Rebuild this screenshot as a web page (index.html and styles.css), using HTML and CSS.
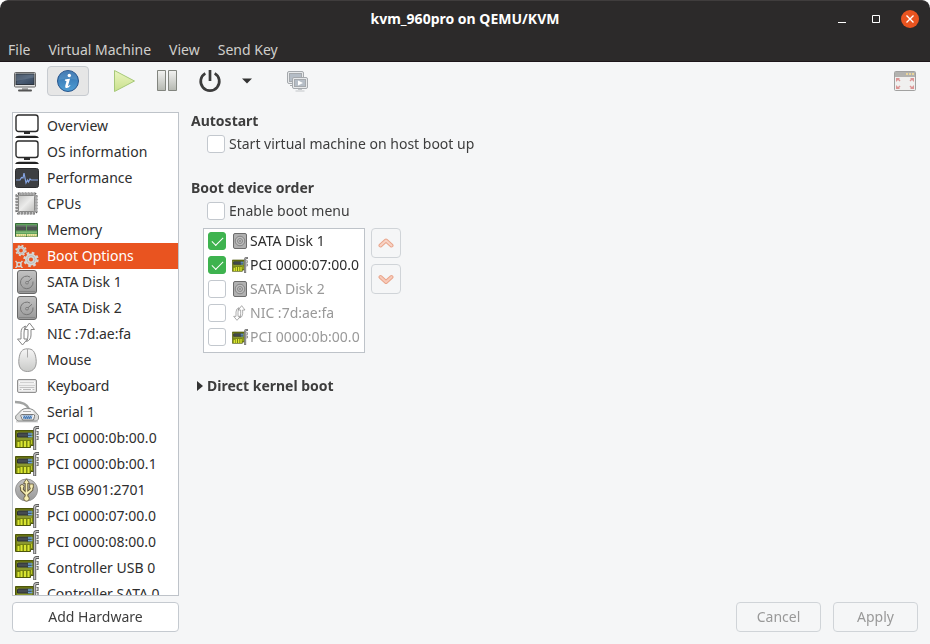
FILE: index.html
```html
<!DOCTYPE html>
<html lang="en">
<head>
<meta charset="utf-8">
<title>kvm_960pro on QEMU/KVM</title>
<link rel="stylesheet" href="styles.css">
</head>
<body>
<svg class="defs" aria-hidden="true">
  <defs>
    <linearGradient id="metal" x1="0" y1="0" x2="0" y2="1"><stop offset="0" stop-color="#c2c2c2"/><stop offset="1" stop-color="#999"/></linearGradient>
    <linearGradient id="light" x1="0" y1="0" x2="0" y2="1"><stop offset="0" stop-color="#f6f6f6"/><stop offset="1" stop-color="#c9cac8"/></linearGradient>
    <linearGradient id="chip" x1="0" y1="0" x2="1" y2="1"><stop offset="0" stop-color="#c4c4c2"/><stop offset=".5" stop-color="#ececeb"/><stop offset="1" stop-color="#bdbdbb"/></linearGradient>
    <linearGradient id="slate" x1="0" y1="0" x2="1" y2="1"><stop offset="0" stop-color="#2d3b4e"/><stop offset=".5" stop-color="#4b5d75"/><stop offset="1" stop-color="#34445a"/></linearGradient>
    <linearGradient id="blue" x1="0" y1="0" x2="0" y2="1"><stop offset="0" stop-color="#2f6cab"/><stop offset="1" stop-color="#4f9ed4"/></linearGradient>
    <linearGradient id="lime" x1="0" y1="0" x2="0" y2="1"><stop offset="0" stop-color="#eaf5c0"/><stop offset="1" stop-color="#c9e08c"/></linearGradient>
    <linearGradient id="pause" x1="0" y1="0" x2="0" y2="1"><stop offset="0" stop-color="#f2f2f1"/><stop offset="1" stop-color="#b5b8b1"/></linearGradient>
    <linearGradient id="board" x1="0" y1="0" x2="0" y2="1"><stop offset="0" stop-color="#66720f"/><stop offset="1" stop-color="#7d8b12"/></linearGradient>
  </defs>
  <symbol id="i-monitor" viewBox="0 0 24 24">
    <rect x="1" y="1" width="22" height="16.500" rx="2.500" fill="#fff" stroke="#2b2b2b" stroke-width="1.400"/>
    <path d="M9 18h6v2H9z" fill="#2b2b2b"/><path d="M0 24q1-2.300 4-2.300h16q3 0 4 2.300z" fill="#222"/>
  </symbol>
  <symbol id="i-perf" viewBox="0 0 24 24">
    <rect x=".5" y="2.500" width="23" height="19" rx="2" fill="#3d3f42" stroke="#2c2d2f"/>
    <path d="M1 14h4l1.500-2.500 1.500.5 1-5 2 10 1.500-3 1 2 1.500-3 1 1h7" fill="none" stroke="#86a5e4" stroke-width="1.200"/>
  </symbol>
  <symbol id="i-cpu" viewBox="0 0 24 24">
    <rect x="2" y="2" width="19" height="19" rx="1.500" fill="none" stroke="#5c5c5c" stroke-width="3" stroke-dasharray="2.100 .9"/>
    <rect x="2" y="2" width="19" height="19" rx="1.500" fill="none" stroke="#bbb" stroke-width="1.500" stroke-dasharray="1 2" stroke-dashoffset="-.5"/>
    <rect x="3.500" y="3.500" width="16" height="16" rx="1" fill="url(#chip)" stroke="#8a8a89"/>
  </symbol>
  <symbol id="i-mem" viewBox="0 0 24 24">
    <path d="M.5 5.500h22v13H.5z" fill="#5fa35c" stroke="#386c3a"/>
    <path d="M1 7.500h10v5H1zM12 7.500h10v5H12z" fill="#4d5450"/><path d="M1 8h10m1 0h10" stroke="#7b837d"/>
    <path d="M1 14.200h21" stroke="#93c384"/><path d="M1 17.200h10m1 0h10" stroke="#f0e9a2" stroke-width="2.600"/><path d="M1.500 17.500h21" stroke="#9aa653" stroke-width="2" stroke-dasharray=".6 1.400"/>
  </symbol>
  <symbol id="i-gears" viewBox="0 0 24 24">
    <g fill="none" stroke="#d5d6d3">
      <circle cx="16" cy="15.500" r="4" stroke-width="4"/><circle cx="16" cy="15.500" r="6.500" stroke-width="2.400" stroke-dasharray="2.550 2.550"/>
      <circle cx="6" cy="6.500" r="3.200" stroke-width="2.600"/><circle cx="6" cy="6.500" r="4.800" stroke-width="1.800" stroke-dasharray="1.880 1.880"/>
      <circle cx="4" cy="20.500" r="2" stroke-width="1.600"/><path d="m.5 17 2 2M7.500 17l-2 2M.5 24l2-2M7.500 24l-2-2" stroke-width="1.500"/>
    </g>
    <circle cx="16" cy="15.500" r="4" fill="none" stroke="#aaaba8" stroke-width=".6"/><circle cx="6" cy="6.500" r="3.300" fill="none" stroke="#aaaba8" stroke-width=".5"/>
  </symbol>
  <symbol id="i-disk" viewBox="0 0 24 24">
    <rect x="2.500" y=".5" width="19" height="23" rx="2.500" fill="url(#metal)" stroke="#686868"/>
    <path d="M4 21.500h16" stroke="#858585"/><path d="M15 7a6.300 6.300 0 1 0 3 4.500M12.500 12.200l4.500-4" fill="none" stroke="#777"/>
    <circle cx="12" cy="12.800" r="1.700" fill="#777"/><circle cx="12" cy="12.800" r=".7" fill="#ddd"/>
  </symbol>
  <symbol id="i-disk-small" viewBox="0 0 16 16">
    <rect x="1.500" y=".5" width="13" height="15" rx="1.500" fill="#b0b0b0" stroke="#6c6c6c"/>
    <circle cx="8" cy="8" r="4.800" fill="#bdbdbd" stroke="#858585"/><circle cx="8" cy="8" r="2.500" fill="none" stroke="#888"/><circle cx="8" cy="8" r=".8" fill="#666"/>
  </symbol>
  <symbol id="i-nic" viewBox="0 0 24 24">
    <path d="M10.500 4Q6 5.500 6 10.500V17H2.500l5 6 5-6H9v-6Q9 7 10.500 4zM11.500 19.500Q16 18 16 13V7.500h3.500L14.500 1 9.500 7.500H13V13q0 4-1.500 6.500z" fill="#fff" stroke="#858585"/>
  </symbol>
  <symbol id="i-mouse" viewBox="0 0 24 24">
    <path d="M12.500.8c5.500 0 7.500 3 8.500 9.700 1.200 8-2 13-8.500 13S2.800 18.500 4 10.500C5 3.800 7 .8 12.500.8z" fill="url(#light)" stroke="#999"/><path d="M12.500 1v8.500" stroke="#aaa"/>
  </symbol>
  <symbol id="i-keyboard" viewBox="0 0 24 24">
    <rect x="2.500" y="5.500" width="19" height="13" rx="1.500" fill="#e0e0e0" stroke="#919191"/>
    <path d="M4 8.500h16M4 11.500h16M4 15.500h16" stroke="#fff" stroke-width="2"/>
    <path d="M5.500 8.500h14M4.500 11.500h15M5.500 13.500h13" stroke="#a3a3a3" stroke-dasharray="1 1"/><path d="M4.500 15.500h2m1.500 0h8m1.500 0h2" stroke="#bbb"/>
  </symbol>
  <symbol id="i-serial" viewBox="0 0 24 24">
    <path d="M1 21.500h22" stroke="#bbb" stroke-width="2" opacity=".6"/>
    <path d="M0 2q11 0 14 7" fill="none" stroke="#a1a3a2" stroke-width="2.400"/>
    <path d="M6.500 10q5-3.500 12 0l5 5.500v3.500l-2 2H3l-2.300-2v-3z" fill="#d8d9d8" stroke="#8c8e8d"/>
    <path d="M7.500 10.500q5-2.500 10 0l2 3.500H5z" fill="#f5f5f5"/><path d="M8 11.500h8" stroke="#aaa"/>
    <path d="M6.500 14.500h12q1.500 0 1 2l-1 3.500h-11l-1.500-3.500q-.5-2 .5-2z" fill="#f2f2f2" stroke="#777"/>
    <path d="M7.500 15.500h10l-1 3.500h-8z" fill="#4d7db4"/><path d="M8 16.500h9M9 18.200h7" stroke="#b4d0ef" stroke-dasharray="1 1" stroke-width=".8"/>
  </symbol>
  <symbol id="i-pci" viewBox="0 0 24 24">
    <path d="M.5 4.500h18.500v15h-3.500v2H.5z" fill="url(#board)" stroke="#4d560b"/>
    <path d="M2 6h15v8H2z" fill="#8b9830"/><path d="M3.500 7h9q1 0 1 1v3h-11V8q0-1 1-1z" fill="#454b50" stroke="#2c3033"/><path d="M12.500 6.500h4v5h-4z" fill="#30404f"/><path d="M13 8h4.500M13 10.500h4.500" stroke="#6fa4d4" stroke-width="1.300"/>
    <path d="M3.500 21v-5M6.500 21v-6M10 21v-6M13.500 21v-6" stroke="#d9e531" stroke-width="2"/><path d="M16.500 14v4" stroke="#bdc82b"/>
    <path d="M19.700 24V3.500q0-2 2-2h2.300" fill="none" stroke="#5a5a5a" stroke-width="3"/><path d="M19.700 23.500V3.500q0-2 2-2h2" fill="none" stroke="#c9c9c9" stroke-width="1.200"/>
    <path d="M21.500 5.500H23v3h-1.500M21.500 10.500H23v3h-1.500" fill="none" stroke="#6d6d6d" stroke-width="1.200"/>
  </symbol>
  <symbol id="i-usb" viewBox="0 0 24 24">
    <circle cx="11.500" cy="12" r="11" fill="url(#metal)" stroke="#959595"/>
    <g stroke="#5d5236" fill="none" stroke-width="3.600"><path d="M11.500 3.500v17M7 8.500v3.500l4.500 4.500M16.500 8v3.500L11.500 16"/></g>
    <g fill="#f6edb2" stroke="#5d5236" stroke-width=".8"><path d="m11.500.8 3 4.700h-6z"/><circle cx="11.500" cy="20.500" r="2.700"/><circle cx="7" cy="8.500" r="2"/><path d="M14.700 6h3.600v4h-3.600z"/></g>
    <path d="M11.500 3.500v17M7 8.500v3.500l4.500 4.500M16.500 8v3.500L11.500 16" stroke="#f6edb2" fill="none" stroke-width="1.700"/>
  </symbol>
</svg>

<div class="window">
  <header class="header">
    <div class="titlebar">
      <h1 class="title">kvm_960pro on QEMU/KVM</h1>
      <div class="window-controls">
        <button class="wm" aria-label="Minimize"><svg width="10" height="10"><path d="M1 8.500h8" stroke="#fff"/></svg></button>
        <button class="wm" aria-label="Maximize"><svg width="10" height="10"><path d="M1.500 1.500h7v7h-7z" fill="none" stroke="#fff"/></svg></button>
        <button class="wm wm-close" aria-label="Close"><svg width="10" height="10"><path d="m1.500 1.500 7 7m0-7-7 7" stroke="#fff" stroke-width="1.400"/></svg></button>
      </div>
    </div>
    <nav class="menubar">
      <button>File</button><button>Virtual Machine</button><button>View</button><button>Send Key</button>
    </nav>
  </header>

  <div class="toolbar">
    <button class="tool" aria-label="Console"><svg width="24" height="24" viewBox="0 0 24 24">
      <rect x="1.500" y="3.500" width="21" height="14.500" rx="1" fill="#e1e1e1" stroke="#666"/><rect x="3" y="5" width="18" height="10.500" fill="url(#slate)" stroke="#2d343d"/>
      <path d="M3 5.500h18v3L3 12z" fill="#788799" opacity=".4"/><path d="M9 18.500h6v2.500H9z" fill="#aaa"/><path d="M6 21.500h12" stroke="#555" stroke-width="2" stroke-linecap="round"/></svg></button>
    <button class="tool tool-active" aria-label="Details" aria-pressed="true"><svg width="24" height="24" viewBox="0 0 24 24">
      <circle cx="12" cy="12" r="10.500" fill="url(#blue)" stroke="#28558c"/><path d="M2.500 11a9.500 9.500 0 0 1 19 0q-9-3-19 0z" fill="#fff" opacity=".1"/>
      <circle cx="13.300" cy="6.500" r="1.700" fill="#fff"/><path d="M9 10.500q3-.5 5-.8l-2 7q0 1 2-.7l.5.5q-2.500 3-4.500 2.500-1.300-.4-.7-2.500l1.200-4.300-1.700-.7z" fill="#fff"/></svg></button>
    <button class="tool tool-run" aria-label="Run"><svg width="24" height="24" viewBox="0 0 24 24"><path d="M2.500 1.500v21L22.500 12z" fill="url(#lime)" stroke="#a6c879" stroke-linejoin="round"/></svg></button>
    <button class="tool" aria-label="Pause"><svg width="24" height="24" viewBox="0 0 24 24"><path d="M2.500 1.500h8v20h-8zM13.500 1.500h8v20h-8z" fill="url(#pause)" stroke="#82857f"/></svg></button>
    <button class="tool" aria-label="Shut down"><svg width="24" height="24" viewBox="0 0 24 24"><path d="M7.300 4.300a9.300 9.300 0 1 0 9.400 0M12 1v11" fill="none" stroke="#3c3c3c" stroke-width="2.700"/></svg></button>
    <button class="tool tool-arrow" aria-label="Shut down options"><svg width="12" height="6"><path d="M1 .5h10l-5 5z" fill="#333"/></svg></button>
    <button class="tool tool-snap" aria-label="Manage snapshots"><svg width="24" height="24" viewBox="0 0 24 24">
      <g fill="#e7e9eb" stroke="#a5a9ad"><rect x="1.500" y="2.500" width="16" height="12" rx="1.500"/><rect x="3.500" y="4.500" width="12" height="8" fill="#b5bdc6"/><path d="M4 16.500h4"/>
      <rect x="6.500" y="8.500" width="15" height="11" rx="1.500"/><rect x="8.500" y="10.500" width="11" height="7" fill="#b5bdc6"/></g><path d="M12 20.500h4M9.500 22h9" stroke="#c3c6c9"/><path d="m12 11.500 5 2.500-5 2.500z" fill="#fff"/></svg></button>
    <button class="tool tool-full" aria-label="Fullscreen"><svg width="24" height="24" viewBox="0 0 24 24">
      <rect x="1.500" y="2.500" width="21" height="19" rx="1" fill="#f0f0ef" stroke="#a1a1a0"/><path d="M2 3h20v5H2z" fill="#b2b2af"/><path d="M13 5h2m1 0h2m1 0h2" stroke="#ead59a" stroke-width="2"/>
      <path d="M3 9h4L6 10l1.500 1.500-1 1L5 11l-2 2zM21 9h-4l1 1-1.500 1.500 1 1L19 11l2 2zM3 20h4l-1-1 1.500-1.500-1-1L5 18l-2-2zM21 20h-4l1-1-1.500-1.500 1-1L19 18l2-2z" fill="#dc9595"/></svg></button>
  </div>

  <div class="body">
    <aside class="sidebar">
      <ul class="hardware">
        <li><svg><use href="#i-monitor"/></svg>Overview</li>
        <li><svg><use href="#i-monitor"/></svg>OS information</li>
        <li><svg><use href="#i-perf"/></svg>Performance</li>
        <li><svg><use href="#i-cpu"/></svg>CPUs</li>
        <li><svg><use href="#i-mem"/></svg>Memory</li>
        <li class="selected"><svg><use href="#i-gears"/></svg>Boot Options</li>
        <li><svg><use href="#i-disk"/></svg>SATA Disk 1</li>
        <li><svg><use href="#i-disk"/></svg>SATA Disk 2</li>
        <li><svg><use href="#i-nic"/></svg>NIC :7d:ae:fa</li>
        <li><svg><use href="#i-mouse"/></svg>Mouse</li>
        <li><svg><use href="#i-keyboard"/></svg>Keyboard</li>
        <li><svg><use href="#i-serial"/></svg>Serial 1</li>
        <li><svg><use href="#i-pci"/></svg>PCI 0000:0b:00.0</li>
        <li><svg><use href="#i-pci"/></svg>PCI 0000:0b:00.1</li>
        <li><svg><use href="#i-usb"/></svg>USB 6901:2701</li>
        <li><svg><use href="#i-pci"/></svg>PCI 0000:07:00.0</li>
        <li><svg><use href="#i-pci"/></svg>PCI 0000:08:00.0</li>
        <li><svg><use href="#i-pci"/></svg>Controller USB 0</li>
        <li><svg><use href="#i-pci"/></svg>Controller SATA 0</li>
      </ul>
      <button class="button">Add Hardware</button>
    </aside>

    <main class="details">
      <section class="group">
        <h2>Autostart</h2>
        <label class="option"><input type="checkbox">Start virtual machine on host boot up</label>
      </section>
      <section class="group">
        <h2>Boot device order</h2>
        <label class="option"><input type="checkbox">Enable boot menu</label>
        <div class="boot">
          <div class="boot-list">
            <label class="device"><input type="checkbox" checked><svg><use href="#i-disk-small"/></svg>SATA Disk 1</label>
            <label class="device"><input type="checkbox" checked><svg><use href="#i-pci"/></svg>PCI 0000:07:00.0</label>
            <label class="device off"><input type="checkbox"><svg><use href="#i-disk-small"/></svg>SATA Disk 2</label>
            <label class="device off"><input type="checkbox"><svg><use href="#i-nic"/></svg>NIC :7d:ae:fa</label>
            <label class="device off"><input type="checkbox"><svg><use href="#i-pci"/></svg>PCI 0000:0b:00.0</label>
          </div>
          <div class="movers">
            <button class="button mover" aria-label="Move up" disabled><svg width="16" height="16"><path d="m2.500 10.500 5.500-5 5.500 5" fill="none" stroke="#e9a58b" stroke-width="4" stroke-linecap="round" stroke-linejoin="round"/><path d="m2.500 10.500 5.500-5 5.500 5" fill="none" stroke="#f8d3c5" stroke-width="2" stroke-linecap="round" stroke-linejoin="round"/></svg></button>
            <button class="button mover" aria-label="Move down" disabled><svg width="16" height="16"><path d="m2.500 6 5.500 5 5.500-5" fill="none" stroke="#e9a58b" stroke-width="4" stroke-linecap="round" stroke-linejoin="round"/><path d="m2.500 6 5.500 5 5.500-5" fill="none" stroke="#f8cab9" stroke-width="2" stroke-linecap="round" stroke-linejoin="round"/></svg></button>
          </div>
        </div>
      </section>
      <button class="expander" aria-expanded="false"><svg width="6" height="10"><path d="M0 0v10l6-5z" fill="#333"/></svg>Direct kernel boot</button>
      <footer class="actions">
        <button class="button action" disabled>Cancel</button>
        <button class="button action" disabled>Apply</button>
      </footer>
    </main>
  </div>
</div>
</body>
</html>
```
FILE: styles.css
```css
* { box-sizing: border-box; }
body {
  margin: 0;
  background: #fff;
  color: #3d3d3d;
  font: 14px/20px "Noto Sans", "Open Sans", sans-serif;
}
button { padding: 0; border: 0; background: none; color: inherit; font: inherit; }
svg { display: block; flex: none; }
.defs { position: absolute; width: 0; height: 0; }
h1, h2 { margin: 0; font-size: 14px; font-weight: 700; }

.window {
  display: flex;
  flex-direction: column;
  height: 100vh;
  overflow: hidden;
  border-radius: 8px 8px 0 0;
  background: #f5f6f7;
}
.header {
  flex: none;
  border-top: 1px solid #403d3d;
  border-bottom: 1px solid #1d151a;
  border-radius: 8px 8px 0 0;
  background: #2c2a2a;
}
.titlebar {
  display: grid;
  grid-template-columns: 1fr auto 1fr;
  align-items: center;
  height: 36px;
  padding: 0 11px;
}
.title { grid-column: 2; color: #fff; }
.window-controls { display: flex; justify-content: flex-end; align-items: center; gap: 16px; }
.wm { display: grid; place-items: center; width: 18px; height: 18px; border-radius: 50%; }
.wm-close { background: #e95420; }
.menubar { display: flex; gap: 18px; height: 24px; padding: 1px 8px 0; color: #d0cfcc; }

.toolbar { display: flex; flex: none; gap: 1px; align-items: center; height: 38px; padding: 0 4px; }
.tool { display: grid; place-items: center; width: 42px; height: 30px; border: 1px solid transparent; border-radius: 4px; }
.tool-active { background: #e6e6e6; border-color: #c7cbd0; }
.tool-run { margin-left: 13px; }
.tool-arrow { width: 30px; }
.tool-snap { margin-left: 14px; }
.tool-full { margin-left: auto; }

.body { display: flex; flex: 1; gap: 12px; min-height: 0; padding: 12px; }
.sidebar { display: flex; flex: none; flex-direction: column; gap: 6px; width: 167px; }
.hardware {
  flex: 1;
  min-height: 0;
  margin: 0;
  padding: 0;
  overflow-y: auto;
  scrollbar-width: none;
  border: 1px solid #bec3c9;
  background: #fff;
  color: #2e2e2e;
  list-style: none;
}
.hardware li { display: flex; align-items: center; gap: 8px; height: 26px; padding-left: 2px; white-space: nowrap; }
.hardware svg { width: 24px; height: 24px; }
.hardware .selected { background: #e95420; color: #fff; }

.button {
  display: grid;
  place-items: center;
  flex: none;
  height: 30px;
  border: 1px solid #c5cad0;
  border-radius: 4px;
  background: #fff;
}
.button:disabled { border-color: #d0d4d8; background: #f5f6f7; color: #999; }

.details { display: flex; flex: 1; flex-direction: column; align-items: flex-start; }
.group { display: flex; flex-direction: column; gap: 4px; margin-bottom: 24px; }
.group + .group { margin-top: 1px; }
.group h2, .expander { line-height: 18px; }
.option { display: flex; align-items: center; gap: 4px; padding-left: 16px; }
input[type="checkbox"] {
  appearance: none;
  flex: none;
  width: 18px;
  height: 18px;
  margin: 0;
  border: 1px solid #c3c8ce;
  border-radius: 3px;
  background: #fff;
}
input[type="checkbox"]:checked {
  border-color: #3eb34f;
  background: #3eb34f;
}
input[type="checkbox"]:checked::before {
  content: "";
  display: block;
  width: 10px;
  height: 5px;
  margin: 4px 3px;
  border: solid #fff;
  border-width: 0 0 1px 1px;
  transform: rotate(-45deg);
}
.boot { display: flex; gap: 6px; padding: 3px 0 0 12px; }
.boot-list { width: 162px; padding-bottom: 3px; overflow: hidden; border: 1px solid #bec3c9; background: #fff; color: #2e2e2e; }
.device { display: flex; align-items: center; height: 24px; padding-left: 4px; white-space: nowrap; }
.device svg { width: 16px; height: 16px; margin: 0 2px 0 6px; }
.off { color: #999; }
.movers { display: flex; flex-direction: column; gap: 6px; }
.mover { width: 30px; }
.expander { display: flex; align-items: center; gap: 4px; padding-left: 6px; font-weight: 700; }
.actions { display: flex; gap: 12px; margin-top: auto; align-self: flex-end; }
.action { width: 85px; }
```
